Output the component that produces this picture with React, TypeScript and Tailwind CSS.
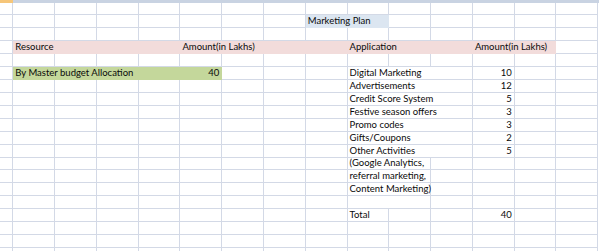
import React from 'react'

type Fill = 'pink' | 'green' | 'blue'
type Cell = { span?: number; text?: string; right?: boolean; fill?: Fill }

const spanClass: Record<number, string> = {
  1: 'col-span-1',
  2: 'col-span-2',
  3: 'col-span-3',
  4: 'col-span-4',
}

const fillClass: Record<Fill, string> = {
  pink: 'bg-[#f2dcdb] border-[#f2dcdb]',
  green: 'bg-[#c4d79b] border-[#c4d79b]',
  blue: 'bg-[#dce6f1] border-[#dce6f1]',
}

const blank = (n: number): Cell[] => Array.from({ length: n }, () => ({}))

const appRow = (text: string, value: string): Cell[] => [
  ...blank(9),
  { span: 3, text },
  { text: value, right: true },
  ...blank(2),
]

const noteRow = (text: string): Cell[] => [...blank(9), { span: 2, text }, ...blank(4)]

const rows: Cell[][] = [
  blank(15),
  [...blank(8), { span: 2, text: 'Marketing Plan', fill: 'blue' }, ...blank(5)],
  blank(15),
  [
    ...blank(1),
    { span: 4, text: 'Resource', fill: 'pink' },
    { span: 3, text: 'Amount(in Lakhs)', fill: 'pink' },
    { fill: 'pink' },
    { span: 3, text: 'Application', fill: 'pink' },
    { span: 2, text: 'Amount(in Lakhs)', fill: 'pink' },
    ...blank(1),
  ],
  blank(15),
  [
    ...blank(1),
    { span: 4, text: 'By Master budget Allocation', fill: 'green' },
    { text: '40', right: true, fill: 'green' },
    ...blank(3),
    { span: 3, text: 'Digital Marketing' },
    { text: '10', right: true },
    ...blank(2),
  ],
  appRow('Advertisements', '12'),
  appRow('Credit Score System', '5'),
  appRow('Festive season offers', '3'),
  appRow('Promo codes', '3'),
  appRow('Gifts/Coupons', '2'),
  appRow('Other Activities', '5'),
  noteRow('(Google Analytics,'),
  noteRow('referral marketing,'),
  noteRow('Content Marketing)'),
  noteRow(''),
  [...blank(9), { text: 'Total' }, ...blank(2), { text: '40', right: true }, ...blank(2)],
  blank(15),
  blank(15),
  blank(15),
]

export default function App() {
  return (
    <div className="w-[599px] h-[251px] overflow-hidden bg-white text-[#0a0a0a] font-['Lato',sans-serif] text-[9.5px]">
      <div className="flex h-[2.5px]">
        <div className="w-[13.3px] bg-[#f6c679]" />
        <div className="flex-1 bg-[#c9d3e2]" />
      </div>
      <div className="grid grid-cols-[13.3px_repeat(14,41.79px)] auto-rows-[12.93px]">
        {rows.map((row, r) =>
          row.map((cell, c) => (
            <div
              key={`${r}-${c}`}
              className={`${spanClass[cell.span ?? 1]} flex items-end overflow-visible whitespace-nowrap border-r border-b px-[2px] pb-[1px] leading-[10px] ${
                cell.fill ? fillClass[cell.fill] : 'border-[#d3d9e6]'
              } ${cell.right ? 'justify-end' : 'justify-start'}`}
            >
              {cell.text}
            </div>
          ))
        )}
      </div>
    </div>
  )
}
